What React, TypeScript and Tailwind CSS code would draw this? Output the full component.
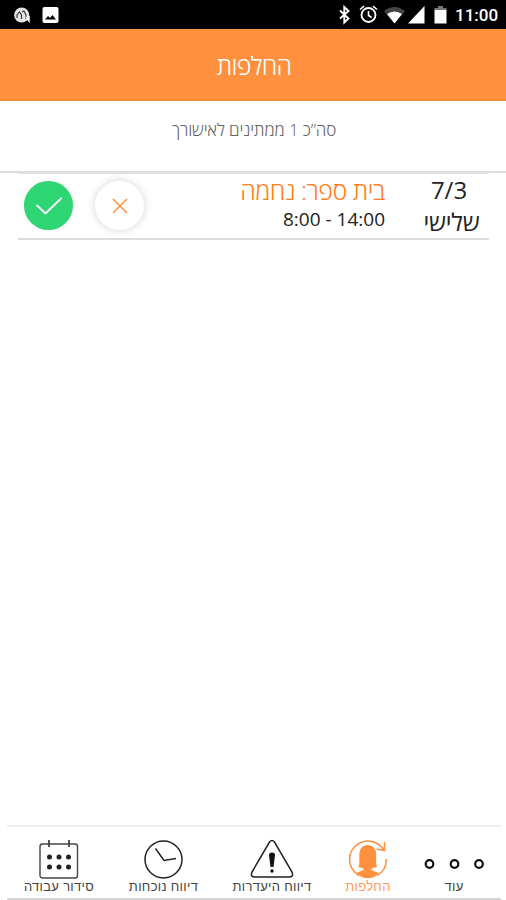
import type { ReactNode } from "react";

function StatusBar() {
  return (
    <header className="flex h-[29px] items-center bg-black pl-[13px] pr-[8px] pt-[2px] text-white" dir="ltr">
      <svg width="18" height="18" viewBox="0 0 18 18" fill="none">
        <circle cx="8.700" cy="8" r="7.600" fill="#e6e6e6" />
        <path d="M4 11V8l2.500-3 2 3v4M9 5l2-1 2 4v4" stroke="#333" strokeWidth="1.100" />
        <path d="M13 10l3 4v-5" stroke="#fff" strokeWidth="1.500" />
      </svg>
      <svg className="ml-[11px]" width="18" height="18" viewBox="0 0 18 18">
        <rect x="0.500" y="0" width="16" height="16" rx="2" fill="#fff" />
        <path d="M3 12.500l3-3.500 2 2 2.500-3 3.500 4.500z" fill="#000" />
      </svg>
      <div className="ml-auto flex items-center pb-[2px]">
        <svg width="13" height="20" viewBox="0 0 13 20" fill="none" stroke="#fff" strokeWidth="1.900">
          <path d="M2 5.500l8.500 8-4.200 4V2l4.200 4-8.500 7.500" />
        </svg>
        <svg className="ml-[8px]" width="19" height="19" viewBox="0 0 19 19" fill="none" stroke="#fff" strokeWidth="1.800">
          <circle cx="9.500" cy="10" r="7" />
          <path d="M9.500 6v4.500l3.200 2M1 4.500L5 1.200M18 4.500L14 1.200" strokeWidth="1.600" />
        </svg>
        <svg className="ml-[6px]" width="21" height="18" viewBox="0 0 21 18">
          <path d="M0 5Q10.500-3 21 5L10.500 17.500z" fill="#444" />
          <path d="M3 8Q10.500 3 18 8L10.500 17.500z" fill="#fff" />
        </svg>
        <svg className="ml-[3px]" width="17" height="18" viewBox="0 0 17 18">
          <path d="M0 17.500L16.500 0v17.500z" fill="#fff" />
        </svg>
        <svg className="ml-[9px]" width="13" height="18" viewBox="0 0 13 18">
          <path d="M4 0h5v2h3.500v2H.5V2H4z" fill="#777" />
          <path d="M.5 4h12v13.500H.5z" fill="#fff" />
        </svg>
        <span className="ml-[8px] block w-[43px] whitespace-nowrap pt-px font-['Roboto',sans-serif] text-[17px] font-medium leading-[20px]">11:00</span>
      </div>
    </header>
  );
}

function NavItem({ label, width, active = false, children }: { label: string; width: string; active?: boolean; children: ReactNode }) {
  return (
    <button className={`flex h-full flex-col items-center pt-[12px] ${width} ${active ? "text-[#ff9a58]" : "text-[#444]"}`}>
      {children}
      <span className="-mt-px whitespace-nowrap text-[13px] leading-[14px] tracking-[0.3px]" dir="rtl">{label}</span>
    </button>
  );
}

export default function App() {
  return (
    <main className="flex h-[900px] w-[506px] flex-col overflow-hidden bg-white font-['Open_Sans','Noto_Sans',sans-serif]">
      <StatusBar />
      <div className="flex h-[72px] items-center justify-center border-b border-[#f38a30] bg-[#ff903e] pl-[2px] pt-[1px] text-white">
        <h1 className="text-[25px] font-light leading-[34px] tracking-[-0.7px]" dir="rtl">החלפות</h1>
      </div>
      <div className="flex h-[72px] justify-center border-b-2 border-[#dedede] pl-[2px] pt-[17px]">
        <p className="whitespace-nowrap text-[17px] font-light leading-[24px] tracking-[-0.12px] text-[#666]" dir="rtl">סה”כ 1 ממתינים לאישורך</p>
      </div>

      <section className="ml-[18px] mr-[17px] flex h-[67px] border-b-2 border-t border-b-[#dcdcdc] border-t-[#e2e2e2]">
        <div className="flex pl-[6px] pt-[7px]">
          <button className="flex size-[49px] items-center justify-center rounded-full bg-[#2ed573] shadow-[0_0_4px_#00000018]">
            <svg width="28" height="20" viewBox="0 0 28 20" fill="none" stroke="#fff" strokeWidth="1.800">
              <path d="M1.500 9l9 8.500L26.500 2" />
            </svg>
          </button>
          <button className="ml-[22px] flex size-[49px] items-center justify-center rounded-full bg-white shadow-[0_0_7px_2px_#0000001c]">
            <svg width="16" height="16" viewBox="0 0 16 16" fill="none" stroke="#ff9040" strokeWidth="1.500">
              <path d="M1 1l14 14M15 1L1 15" />
            </svg>
          </button>
        </div>
        <div className="ml-auto flex flex-col items-end">
          <h2 className="-mt-px whitespace-nowrap text-[25px] font-light leading-[34px] tracking-[-0.5px] text-[#ff7d1a]" dir="rtl">בית ספר: נחמה</h2>
          <p className="whitespace-nowrap text-[19px] leading-[25px] text-[#222]" dir="ltr">8:00 - 14:00</p>
        </div>
        <div className="-mt-px ml-[29px] flex w-[75px] flex-col items-center pr-[3px] text-[#222]">
          <span className="whitespace-nowrap pr-[2px] text-[24px] leading-[34px]">7/3</span>
          <span className="whitespace-nowrap pl-[3px] text-[24px] leading-[29px] tracking-[-0.2px]" dir="rtl">שלישי</span>
        </div>
      </section>

      <nav className="ml-[7px] mr-[5px] mt-auto flex h-[75px] border-b-2 border-t-2 border-b-[#d5d5d5] border-t-[#eee] font-['Liberation_Sans',sans-serif]" dir="ltr">
        <NavItem label="סידור עבודה" width="w-[104px]">
          <svg width="40" height="42" viewBox="0 0 40 42" fill="none" stroke="#444" strokeWidth="1.400">
            <rect x="1" y="5" width="37.500" height="34" rx="2.500" />
            <path d="M10 1v7M30 1v7" strokeWidth="1.800" />
            <g fill="#222" stroke="none">
              <circle cx="10.500" cy="18" r="2.500" /><circle cx="20" cy="18" r="2.500" /><circle cx="29.500" cy="18" r="2.500" />
              <circle cx="10.500" cy="28" r="2.500" /><circle cx="20" cy="28" r="2.500" /><circle cx="29.500" cy="28" r="2.500" />
            </g>
          </svg>
        </NavItem>
        <NavItem label="דיווח נוכחות" width="w-[105px]">
          <svg width="40" height="42" viewBox="0 0 40 42" fill="none" stroke="#222" strokeWidth="1.500">
            <circle cx="19.500" cy="20.500" r="18.500" />
            <path d="M11.500 9.500l8.500 12 12-2" />
          </svg>
        </NavItem>
        <NavItem label="דיווח היעדרות" width="w-[112px]">
          <svg width="44" height="42" viewBox="0 0 44 42" fill="none" stroke="#222" strokeWidth="1.500">
            <path d="M19.500 3Q22 0 24.500 3L42 33Q44 38 39 38H5Q0 38 2 33z" />
            <path d="M19 16q0-2.500 3-2.500t3 2.500l-1.500 12h-3z" fill="#111" stroke="none" />
            <circle cx="22" cy="32" r="1.700" fill="#111" stroke="none" />
          </svg>
        </NavItem>
        <NavItem label="החלפות" width="w-[80px]" active>
          <svg width="40" height="42" viewBox="0 0 40 42" fill="none" stroke="#ff903e" strokeWidth="1.500">
            <path d="M11 36.500A18.400 18.400 0 1 1 35.500 10.500M38.300 20A18.400 18.400 0 0 1 29 36.500M36.500 3v8.500l-8-1.500" />
            <path d="M10.500 28c1.500-5 .5-9 1-15Q13 6 19.500 6T28 13c.5 6-.5 10 1 15l-5.500 1.500v1.500l7 3Q27 39.300 20 39.300T8.500 34l7-3v-1.500z" fill="#ff903e" stroke="none" />
          </svg>
        </NavItem>
        <NavItem label="עוד" width="w-[92px]">
          <svg width="62" height="42" viewBox="0 0 62 42" fill="none" stroke="#111" strokeWidth="2.200">
            <circle cx="6.500" cy="25" r="3.800" /><circle cx="31.500" cy="25" r="3.800" /><circle cx="56" cy="25" r="3.800" />
          </svg>
        </NavItem>
      </nav>
    </main>
  );
}
